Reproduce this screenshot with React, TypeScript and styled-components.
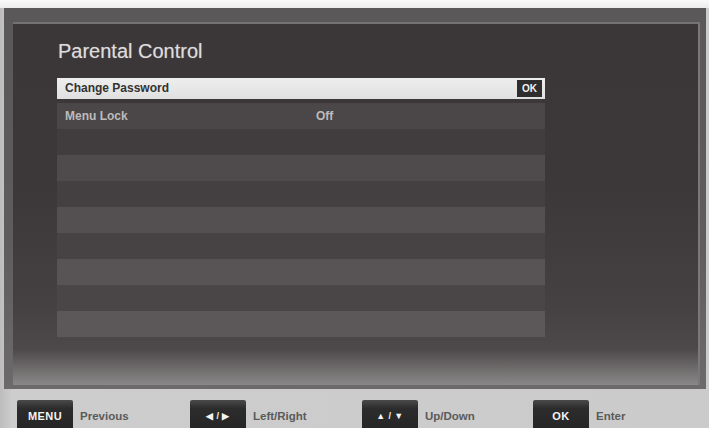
import React from "react";
import styled, { createGlobalStyle } from "styled-components";

const GlobalStyle = createGlobalStyle`
  html, body {
    margin: 0;
    padding: 0;
    background: #c9c9c9;
    font-family: "Liberation Sans", Arial, sans-serif;
  }
`;

const Page = styled.div`
  width: 709px;
  height: 428px;
  display: flex;
  flex-direction: column;
  overflow: hidden;
  background: linear-gradient(90deg, #bdbdbd 0px, #cdcdcd 12px, #cbcbcb 100%);
`;

const TopStrip = styled.div`
  height: 8px;
  background: linear-gradient(180deg, #fafafa, #ececec);
`;

const Screen = styled.div`
  margin: 0 3px 0 4px;
  height: 384px;
  padding: 14px 6px 4px 9px;
  box-sizing: border-box;
  background: linear-gradient(180deg, #5a5858 0%, #5e5c5c 60%, #6c6a6a 100%);
  display: flex;
`;

const Panel = styled.div`
  flex: 1;
  box-sizing: border-box;
  border-top: 2px solid #747272;
  border-right: 2px solid #7a7878;
  background: linear-gradient(
    180deg,
    #3b3637 0%,
    #3c3738 45%,
    #454142 78%,
    #4d494a 90%,
    #8a8888 100%
  );
  padding: 15px 0 0 44px;
  display: flex;
  flex-direction: column;
`;

const Title = styled.h1`
  margin: 0 0 0 1px;
  font-size: 20px;
  line-height: 24px;
  font-weight: normal;
  color: #dcdcdc;
  text-shadow: 0 0 1px rgba(220, 220, 220, 0.5);
`;

const List = styled.div`
  margin-top: 15px;
  width: 488px;
  display: flex;
  flex-direction: column;
`;

const SelectedRow = styled.div`
  height: 21px;
  margin-bottom: 4px;
  background: linear-gradient(180deg, #eeeeee, #e0e0e0);
  display: flex;
  align-items: center;
  padding-left: 8px;
  box-sizing: border-box;
  font-size: 12px;
  font-weight: bold;
  color: #333;
`;

const RowLabel = styled.span`
  flex: 1;
`;

const OkBadge = styled.span`
  width: 25px;
  height: 17px;
  margin-right: 3px;
  background: #2f2d2d;
  color: #f2f2f2;
  font-size: 10px;
  font-weight: bold;
  display: flex;
  align-items: center;
  justify-content: center;
`;

const rowShade = (i: number) => {
  const t = i / 8;
  const light = i % 2 === 0;
  const from = light ? [0x4b, 0x47, 0x48] : [0x40, 0x3c, 0x3d];
  const to = light ? [0x5c, 0x58, 0x59] : [0x4b, 0x47, 0x48];
  const c = from.map((v, k) => Math.round(v + (to[k] - v) * t));
  return `rgb(${c.join(",")})`;
};

const Row = styled.div<{ $index: number }>`
  height: 26px;
  background: ${(p) => rowShade(p.$index)};
  display: flex;
  align-items: center;
  padding-left: 8px;
  box-sizing: border-box;
  font-size: 12px;
  font-weight: bold;
  color: #bdbbbb;
`;

const RowName = styled.span`
  width: 251px;
`;

const Footer = styled.div`
  flex: 1;
  display: grid;
  grid-template-columns: 173px 172px 171px 1fr;
  padding: 11px 0 0 17px;
  box-sizing: border-box;
`;

const Hint = styled.div`
  display: flex;
  align-items: flex-start;
  gap: 7px;
`;

const Key = styled.div`
  width: 56px;
  height: 28px;
  border-radius: 2px 2px 0 0;
  background: linear-gradient(180deg, #4a4a4a 0%, #2c2c2c 30%, #262626 100%);
  color: #f4f4f4;
  font-size: 11px;
  font-weight: bold;
  display: flex;
  justify-content: center;
  padding-top: 10px;
  box-sizing: border-box;
  letter-spacing: 0.4px;
`;

const ArrowKey = styled(Key)`
  font-size: 9px;
  padding-top: 11px;
`;

const HintText = styled.span`
  padding-top: 10px;
  font-size: 11.5px;
  font-weight: bold;
  color: #5a5a5a;
`;

const rows = [
  { name: "Menu Lock", value: "Off" },
  { name: "", value: "" },
  { name: "", value: "" },
  { name: "", value: "" },
  { name: "", value: "" },
  { name: "", value: "" },
  { name: "", value: "" },
  { name: "", value: "" },
  { name: "", value: "" },
];

const hints = [
  { key: "MENU", label: "Previous", arrow: false },
  { key: "\u25C0 / \u25B6", label: "Left/Right", arrow: true },
  { key: "\u25B2 / \u25BC", label: "Up/Down", arrow: true },
  { key: "OK", label: "Enter", arrow: false },
];

const App: React.FC = () => {
  return (
    <>
      <GlobalStyle />
      <Page>
        <TopStrip />
        <Screen>
          <Panel>
            <Title>Parental Control</Title>
            <List>
              <SelectedRow>
                <RowLabel>Change Password</RowLabel>
                <OkBadge>OK</OkBadge>
              </SelectedRow>
              {rows.map((row, i) => (
                <Row key={i} $index={i}>
                  <RowName>{row.name}</RowName>
                  <span>{row.value}</span>
                </Row>
              ))}
            </List>
          </Panel>
        </Screen>
        <Footer>
          {hints.map((h) => (
            <Hint key={h.label}>
              {h.arrow ? <ArrowKey>{h.key}</ArrowKey> : <Key>{h.key}</Key>}
              <HintText>{h.label}</HintText>
            </Hint>
          ))}
        </Footer>
      </Page>
    </>
  );
};

export default App;
